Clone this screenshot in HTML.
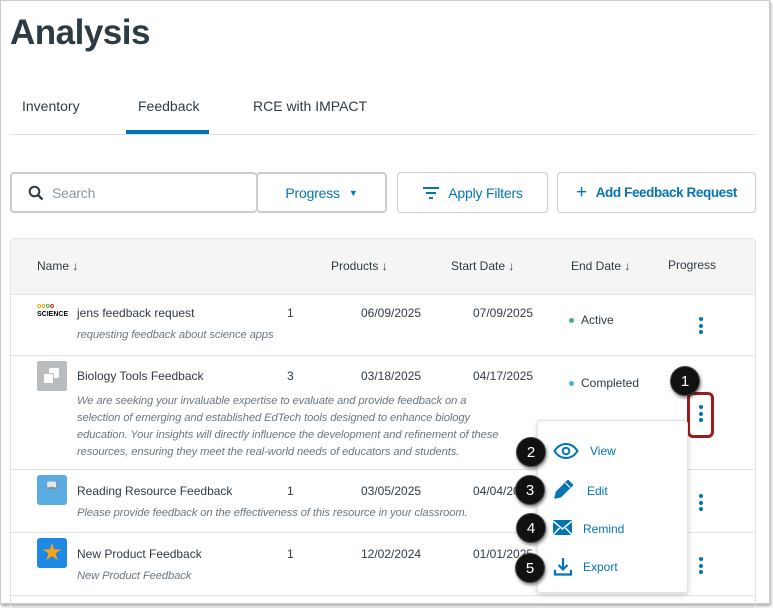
<!DOCTYPE html>
<html><head><style>
*{box-sizing:border-box;margin:0;padding:0}
body{width:773px;height:607px;background:#fff;font-family:"Liberation Sans",sans-serif;color:#2d3b45;position:relative;overflow:hidden}
.frame{position:absolute;left:0;top:0;width:770px;height:604px;border:1px solid #c7cdd1;box-shadow:1px 2px 3px rgba(0,0,0,.35)}
.a{position:absolute;white-space:nowrap}
h1{position:absolute;left:10px;top:13px;font-size:35px;font-weight:bold;color:#2d3b45;letter-spacing:-.5px}
.tab{font-size:14px;top:98px}
.btn{position:absolute;top:172px;height:41px;border:1px solid #c7cdd1;border-radius:4px;background:#fff;color:#0374b5;font-size:14px;display:flex;align-items:center;justify-content:center;letter-spacing:-.2px}
.hd{font-size:12px;color:#2d3b45;top:259px}
.c{font-size:12px}
.d{font-size:11.2px;font-style:italic;color:#6b7780;letter-spacing:-.1px}
.line{position:absolute;left:11px;width:744px;height:1px;background:#dfe3e6}
.keb{position:absolute;width:4px}
.keb i{display:block;width:4px;height:4px;border-radius:2px;background:#0374b5;margin-bottom:2.5px}
.bdg{position:absolute;width:30px;height:30px;border-radius:15px;background:#111;color:#fff;font-size:15px;text-align:center;line-height:30px;box-shadow:1px 2px 3px rgba(0,0,0,.5);border:1px solid #444}
.mi{position:absolute;font-size:12px;color:#0374b5}
</style></head><body>
<div class="frame"></div>
<h1>Analysis</h1>
<div class="a tab" style="left:22px">Inventory</div>
<div class="a tab" style="left:138px">Feedback</div>
<div class="a tab" style="left:253px">RCE with IMPACT</div>
<div class="a" style="left:126px;top:130px;width:83px;height:4px;background:#0374b5"></div>
<div class="a" style="left:10px;top:134px;width:746px;height:1px;background:#dfe3e6"></div>

<div class="btn" style="left:10px;width:247px;justify-content:flex-start;padding-left:16px;color:#8b969e;border-color:#c7cdd1;border-width:2px 1px 2px 2px">
<svg width="16" height="16" viewBox="0 0 16 16"><circle cx="6.5" cy="6.5" r="4.8" fill="none" stroke="#2d3b45" stroke-width="2"/><path d="M10 10l4.5 4.5" stroke="#2d3b45" stroke-width="2.3"/></svg><span style="margin-left:8px">Search</span></div>
<div class="btn" style="left:256px;width:131px;border-width:2px">Progress<span style="font-size:9px;margin-left:9px">&#9660;</span></div>
<div class="btn" style="left:397px;width:151px"><svg width="18" height="12" viewBox="0 0 18 12" style="margin-right:8px"><path d="M1 1h16M4 6h10M7 11h4" stroke="#0374b5" stroke-width="2"/></svg>Apply Filters</div>
<div class="btn" style="left:557px;width:199px;font-weight:bold;font-size:13.5px;letter-spacing:-.4px"><span style="font-weight:normal;font-size:19px;margin-right:9px">+</span>Add Feedback Request</div>

<div class="a" style="left:10px;top:238px;width:746px;height:370px;border:1px solid #dfe3e6;border-radius:4px"></div>
<div class="a" style="left:11px;top:239px;width:744px;height:55px;background:#f5f5f5"></div>
<div class="a hd" style="left:37px">Name &#8595;</div>
<div class="a hd" style="left:331px">Products &#8595;</div>
<div class="a hd" style="left:451px">Start Date &#8595;</div>
<div class="a hd" style="left:571px">End Date &#8595;</div>
<div class="a hd" style="left:668px;top:258px">Progress</div>
<div class="line" style="top:294px"></div>
<div class="line" style="top:355px"></div>
<div class="line" style="top:469px"></div>
<div class="line" style="top:532px"></div>
<div class="line" style="top:595px"></div>

<!-- row1 -->
<div class="a" style="left:37px;top:303px;width:30px;height:24px;font-size:7px;font-weight:bold;line-height:8px;color:#c00"><span style="color:#e8a000">oo</span><span style="color:#3a5">o</span>o<br><span style="color:#000">SCIENCE</span></div>
<div class="a c" style="left:77px;top:306px">jens feedback request</div>
<div class="a d" style="left:77px;top:329px">requesting feedback about science apps</div>
<div class="a c" style="left:287px;top:306px">1</div>
<div class="a c" style="left:361px;top:306px">06/09/2025</div>
<div class="a c" style="left:473px;top:306px">07/09/2025</div>
<div class="a" style="left:569px;top:318px;width:5px;height:5px;border-radius:3px;background:#4caf7a"></div>
<div class="a c" style="left:581px;top:313px">Active</div>
<div class="keb" style="left:699px;top:317px"><i></i><i></i><i></i></div>

<!-- row2 -->
<div class="a" style="left:37px;top:361px;width:30px;height:30px;background:#b8bcbf;border-radius:2px"><div style="position:absolute;left:12px;top:7px;width:10px;height:10px;background:#fff;border-radius:2px"></div><div style="position:absolute;left:6px;top:12px;width:11px;height:11px;background:#fff;border-radius:2px;border:1px solid #b8bcbf"></div></div>
<div class="a c" style="left:77px;top:369px">Biology Tools Feedback</div>
<div class="a d" style="left:77px;top:393px;line-height:17px">We are seeking your invaluable expertise to evaluate and provide feedback on a<br>selection of emerging and established EdTech tools designed to enhance biology<br>education. Your insights will directly influence the development and refinement of these<br>resources, ensuring they meet the real-world needs of educators and students.</div>
<div class="a c" style="left:287px;top:369px">3</div>
<div class="a c" style="left:361px;top:369px">03/18/2025</div>
<div class="a c" style="left:473px;top:369px">04/17/2025</div>
<div class="a" style="left:569px;top:381px;width:5px;height:5px;border-radius:3px;background:#4ab3d9"></div>
<div class="a c" style="left:581px;top:376px">Completed</div>
<div class="a" style="left:687px;top:392px;width:27px;height:46px;border:3px solid #9b1c1c;border-radius:6px"></div>
<div class="keb" style="left:699px;top:405px"><i></i><i></i><i></i></div>

<!-- row3 -->
<div class="a" style="left:37px;top:475px;width:30px;height:30px;background:#5aabe0;border-radius:3px;color:#fff;font-size:9px;text-align:center;line-height:20px">&#128214;</div>
<div class="a c" style="left:77px;top:484px">Reading Resource Feedback</div>
<div class="a d" style="left:77px;top:507px">Please provide feedback on the effectiveness of this resource in your classroom.</div>
<div class="a c" style="left:287px;top:484px">1</div>
<div class="a c" style="left:361px;top:484px">03/05/2025</div>
<div class="a c" style="left:473px;top:484px">04/04/2025</div>
<div class="keb" style="left:699px;top:494px"><i></i><i></i><i></i></div>

<!-- row4 -->
<div class="a" style="left:37px;top:538px;width:30px;height:30px;background:#1e88e5;border-radius:3px;color:#f7a21b;font-size:24px;text-align:center;line-height:30px">&#9733;</div>
<div class="a c" style="left:77px;top:547px">New Product Feedback</div>
<div class="a d" style="left:77px;top:570px">New Product Feedback</div>
<div class="a c" style="left:287px;top:547px">1</div>
<div class="a c" style="left:361px;top:547px">12/02/2024</div>
<div class="a c" style="left:473px;top:547px">01/01/2025</div>
<div class="keb" style="left:699px;top:557px"><i></i><i></i><i></i></div>

<!-- menu -->
<div class="a" style="left:537px;top:420px;width:151px;height:173px;background:#fff;border:1px solid #e3e6e8;border-radius:4px;box-shadow:0 2px 6px rgba(0,0,0,.2)"></div>
<svg class="a" style="left:553px;top:443px" width="26" height="16" viewBox="0 0 26 16"><path d="M1.5 8C5 2.5 9 1 13 1s8 1.5 11.5 7C21 13.5 17 15 13 15S5 13.5 1.5 8z" fill="none" stroke="#0374b5" stroke-width="2"/><circle cx="13" cy="8" r="3.3" fill="none" stroke="#0374b5" stroke-width="2"/></svg>
<div class="mi" style="left:590px;top:444px">View</div>
<svg class="a" style="left:553px;top:478px" width="22" height="22" viewBox="0 0 22 22"><path d="M2 20l1.5-6L15 2.5l4.5 4.5L8 18.5z" fill="#0374b5" stroke="#0374b5" stroke-width="1.5" stroke-linejoin="round"/><path d="M12.5 5l4.5 4.5" stroke="#fff" stroke-width="1.2"/></svg>
<div class="mi" style="left:587px;top:484px">Edit</div>
<svg class="a" style="left:553px;top:520px" width="19" height="15" viewBox="0 0 19 15"><rect x="0" y="0" width="19" height="15" fill="#0374b5"/><path d="M0 1l9.5 8L19 1M0 15l6.5-7M19 15l-6.5-7" fill="none" stroke="#fff" stroke-width="1.5"/></svg>
<div class="mi" style="left:583px;top:522px">Remind</div>
<svg class="a" style="left:553px;top:557px" width="20" height="20" viewBox="0 0 20 20"><path d="M10 1v11M5.5 8l4.5 4.5L14.5 8M2 13v4.5h16V13" fill="none" stroke="#0374b5" stroke-width="2.2"/></svg>
<div class="mi" style="left:583px;top:560px">Export</div>

<div class="bdg" style="left:670px;top:366px">1</div>
<div class="bdg" style="left:516px;top:437px">2</div>
<div class="bdg" style="left:515px;top:475px">3</div>
<div class="bdg" style="left:516px;top:513px">4</div>
<div class="bdg" style="left:515px;top:553px">5</div>
</body></html>
